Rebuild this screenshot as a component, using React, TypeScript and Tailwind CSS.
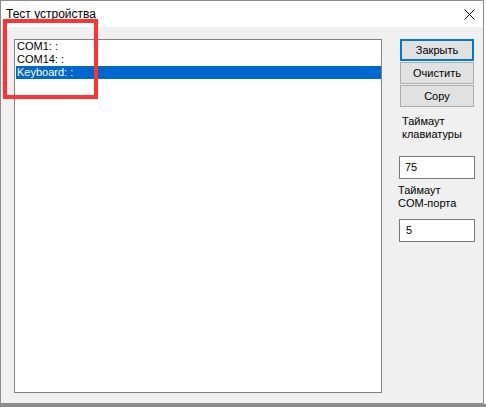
import React from "react";

const font = { fontFamily: '"Liberation Sans", Arial, sans-serif' };

function Btn({ label, def }: { label: string; def?: boolean }) {
  return (
    <div
      className={
        "ml-px w-[74px] h-[22px] bg-[#e1e1e1] flex items-center justify-center text-[11px] leading-[13px] text-black " +
        (def ? "border-2 border-[#0078d7]" : "border border-[#adadad]")
      }
    >
      {label}
    </div>
  );
}

export default function App() {
  const items = ["COM1: :", "COM14: :", "Keyboard: :"];
  return (
    <div className="relative w-[486px] h-[407px] bg-white overflow-hidden" style={font}>
      <div className="w-[484px] h-[404px] border border-[#8c8c8c] flex flex-col">
        <div className="h-[26px] bg-white flex items-center justify-between pl-[5px]">
          <span className="text-[12px] leading-[26px] text-black">Тест устройства</span>
          <svg width="11" height="11" viewBox="0 0 11 11" className="mr-[8px] mt-[1px]">
            <path d="M0.5 0.5 L10.5 10.5 M10.5 0.5 L0.5 10.5" stroke="#000" strokeWidth="1" />
          </svg>
        </div>
        <div className="flex-1 bg-[#f0f0f0] flex pl-[13px] pt-[12px]">
          <div className="w-[368px] h-[354px] bg-white border border-[#828282] pl-px">
            {items.map((it, i) => (
              <div
                key={it}
                className={
                  "h-[13px] text-[11px] leading-[13px] pl-px whitespace-pre " +
                  (i === 2 ? "bg-[#0067ce] text-white" : "text-black")
                }
              >
                {it}
              </div>
            ))}
          </div>
          <div className="ml-[17px] w-[76px] flex flex-col">
            <div className="flex flex-col gap-px">
              <Btn label="Закрыть" def />
              <Btn label="Очистить" />
              <Btn label="Copy" />
            </div>
            <div className="mt-[8px] ml-[3px] text-[11px] leading-[13px] text-black">
              Таймаут
              <br />
              клавиатуры
            </div>
            <div className="mt-[15px] w-[76px] h-[23px] bg-white border border-[#7a7a7a] pl-[5px] flex items-center text-[11px] leading-[13px] text-black">
              75
            </div>
            <div className="mt-[5px] -ml-px text-[11px] leading-[13px] text-black">
              Таймаут
              <br />
              COM-порта
            </div>
            <div className="mt-[9px] w-[76px] h-[23px] bg-white border border-[#7a7a7a] pl-[6px] flex items-center text-[11px] leading-[13px] text-black">
              5
            </div>
          </div>
        </div>
      </div>
      <div className="h-[3px] bg-[#8c8c8c]" />
      <div className="absolute left-[3px] top-[19px] w-[95px] h-[80px] border-4 border-[#ff3333]" />
    </div>
  );
}
